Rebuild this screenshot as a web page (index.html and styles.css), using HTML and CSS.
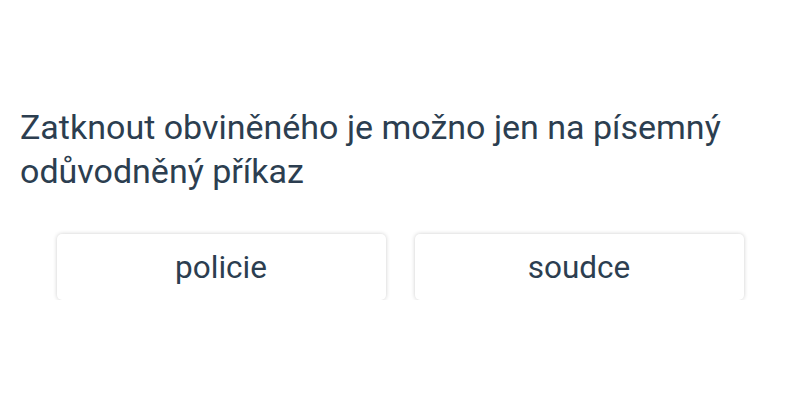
FILE: index.html
```html
<!DOCTYPE html>
<html lang="cs">
<head>
    <meta charset="UTF-8">
    <meta name="viewport" content="width=device-width, initial-scale=1.0">
    <title>Otázka</title>

    <link rel="stylesheet" href="styles.css">
</head>
<body>
    <div class="question">
        <p class="question-text">Zatknout obviněného je možno jen na písemný odůvodněný příkaz</p>

        <div class="answers">
            <button class="answer">policie</button>
            <button class="answer">soudce</button>
        </div>
    </div>
</body>
</html>
```

FILE: styles.css
```css
body {
    margin: 0;
    background: #fff;
    font-family: Roboto, "Noto Sans", sans-serif;
    color: #2c3e50;
}

.question {
    padding: 105px 20px 0 20px;
}

.question-text {
    margin: 0;
    font-size: 34px;
    line-height: 44px;
    padding-right: 20px;
}

.answers {
    display: flex;
    justify-content: center;
    gap: 29px;
    margin-top: 41px;
}

.answer {
    flex: 0 0 auto;
    width: 329px;
    height: 66px;
    background: #fff;
    border: none;
    border-radius: 5px;
    box-shadow: 0 0 4px rgba(0, 0, 0, 0.2);
    font-family: Roboto, "Noto Sans", sans-serif;
    font-size: 31.5px;
    color: #2c3e50;
    cursor: pointer;
}
```
